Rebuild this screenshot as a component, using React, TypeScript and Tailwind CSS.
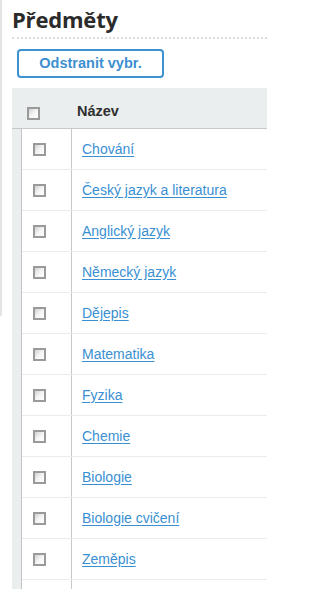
import * as React from 'react'

const subjects = [
  'Chování',
  'Český jazyk a literatura',
  'Anglický jazyk',
  'Německý jazyk',
  'Dějepis',
  'Matematika',
  'Fyzika',
  'Chemie',
  'Biologie',
  'Biologie cvičení',
  'Zeměpis',
  '',
]

const Checkbox = () => (
  <span className="block h-[13px] w-[13px] border-2 border-[#9a9a9a] bg-gradient-to-br from-[#d2d2d2] via-[#f4f4f4] to-[#ffffff]" />
)

export default function App() {
  return (
    <div className="flex h-[589px] w-[267px] overflow-hidden bg-white font-['Liberation_Sans',Arial,sans-serif]">
      {/* left edge of the page frame */}
      <div className="h-[316px] w-[2px] shrink-0 bg-[#e4e4e4]" />

      <div className="ml-[10px] flex min-w-0 flex-1 flex-col">
        <h1 className="mt-[4px] h-[30px] font-['Open_Sans',sans-serif] text-[22px] font-bold leading-[30px] tracking-[-0.2px] text-[#2b2b2b]">
          Předměty
        </h1>
        <div className="mt-[3px] border-t-2 border-dotted border-[#dcdcdc]" />

        <div className="mt-[10px] pl-[5px]">
          <button className="flex h-[29px] w-[147px] items-center justify-center rounded-[4px] border-2 border-[#3d93d2] bg-white text-[14.5px] font-bold text-[#3d8fd0]">
            Odstranit vybr.
          </button>
        </div>

        {/* table */}
        <div className="mt-[10px] flex-1 bg-[#ebeeee]">
          <div className="flex h-[41px] items-center border-b border-[#c3c8c9]">
            <div className="flex w-[59px] shrink-0 items-center pl-[15px] pt-[10px]">
              <Checkbox />
            </div>
            <div className="pl-[6px] pt-[8px] text-[14.5px] font-bold text-[#2f2f2f]">Název</div>
          </div>

          <div className="ml-[9px] border-l border-[#c4c4c4] bg-white">
            {subjects.map((name, i) => (
              <div key={i} className="flex h-[41px] border-b border-[#e8ecec]">
                <div className="flex w-[50px] shrink-0 items-center border-r border-[#c8c8c8] pl-[11px]">
                  {name && <Checkbox />}
                </div>
                <div className="flex items-center pl-[10px]">
                  {name && (
                    <a href="#" className="text-[14px] text-[#3a8fd3] underline underline-offset-[2px]">
                      {name}
                    </a>
                  )}
                </div>
              </div>
            ))}
          </div>
        </div>
      </div>
    </div>
  )
}
